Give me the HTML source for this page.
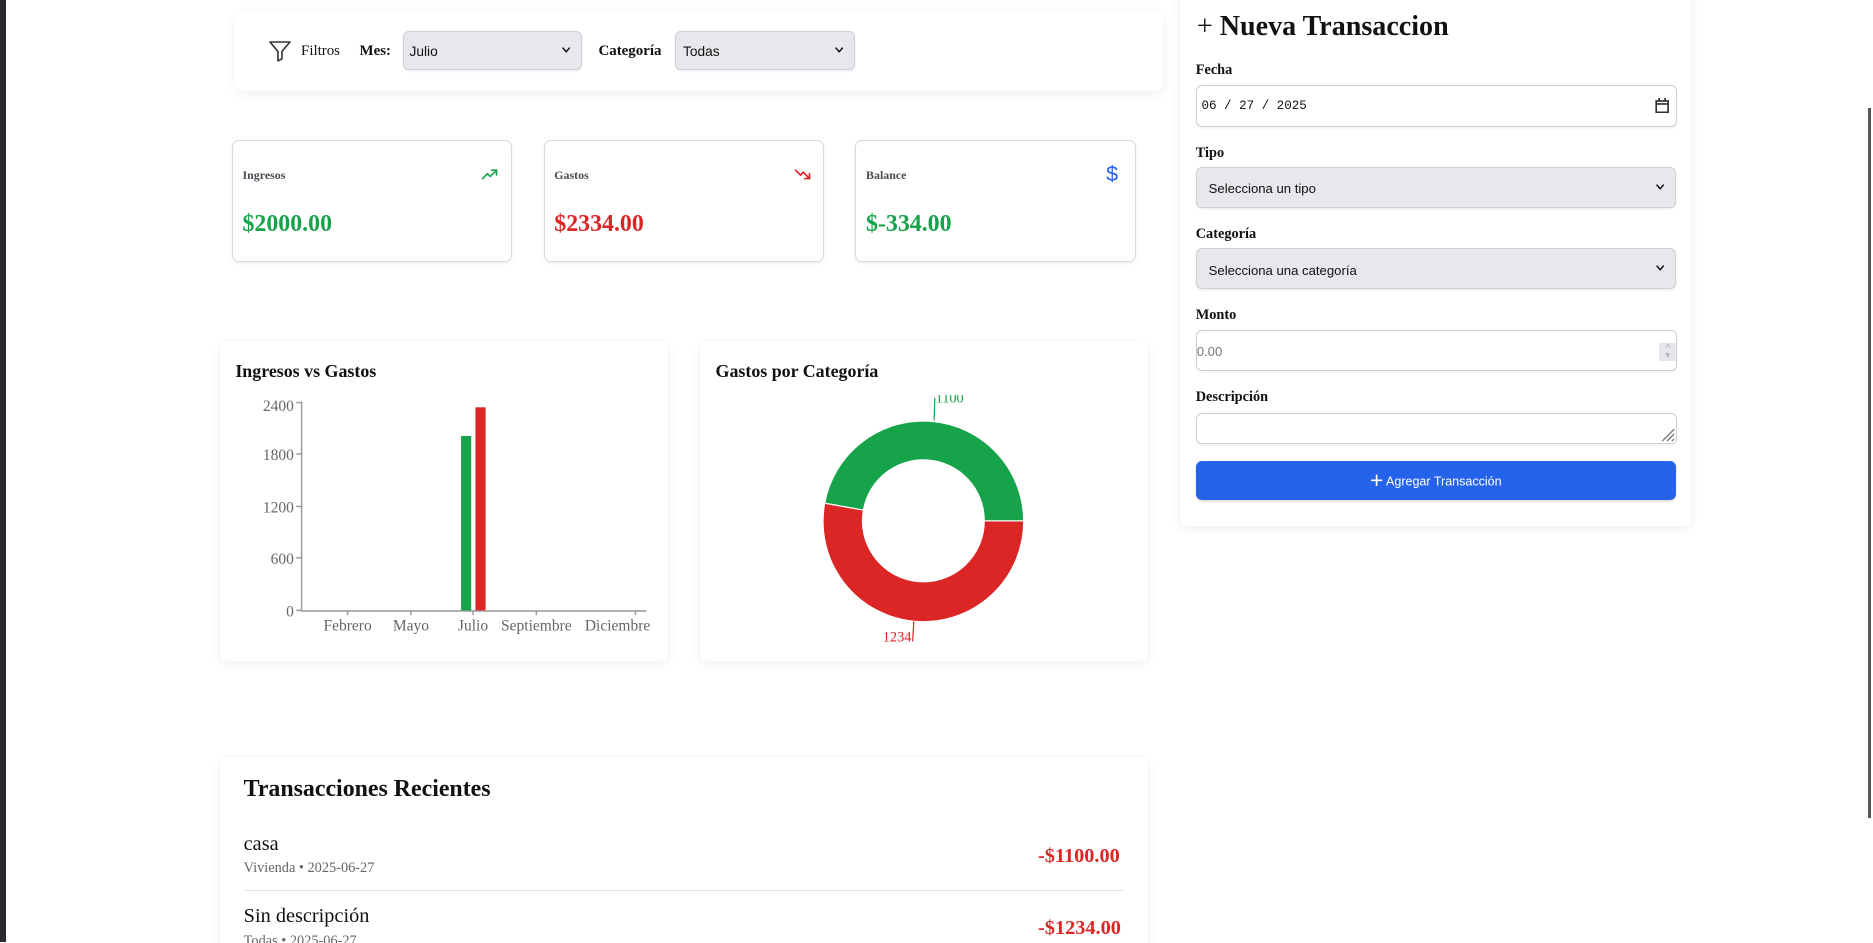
<!DOCTYPE html>
<html><head><meta charset="utf-8"><style>
html,body{margin:0;padding:0;background:#fff;overflow:hidden;width:1873px;height:943px}
#w{zoom:1.19452;position:relative;width:1568px;height:789px;font-family:"Liberation Serif",serif;color:#111}
.a{position:absolute}
.card{position:absolute;background:#fff;border-radius:6px;box-shadow:0 2px 8px rgba(0,0,0,.07)}
.sc{position:absolute;background:#fff;border:1px solid #d6d6dc;border-radius:6px;box-shadow:0 1px 3px rgba(0,0,0,.08)}
.sel{position:absolute;background:#e8e8ec;border:1px solid #cfcfd6;border-radius:5px;font-family:"Liberation Sans",sans-serif;font-size:12px;color:#111;box-sizing:border-box;box-shadow:0 1px 2px rgba(0,0,0,.08)}
.inp{position:absolute;background:#fff;border:1px solid #cfcfd6;border-radius:5px;box-sizing:border-box;box-shadow:0 1px 2px rgba(0,0,0,.06)}
.chev{position:absolute;right:9px;top:50%;margin-top:-3px}
.lbl{position:absolute;font-weight:bold;font-size:12px;left:1001px}
</style></head><body><div id="w">
<div class="a" style="left:0;top:0;width:5px;height:789px;background:#2b2a33"></div>
<div class="a" style="left:1564px;top:90px;width:2px;height:595px;background:#555"></div>

<!-- filters -->
<div class="card" style="left:197px;top:9px;width:777px;height:67px"></div>
<svg class="a" style="left:224px;top:33px" width="20" height="20" viewBox="0 0 24 24" fill="none" stroke="#333" stroke-width="1.6" stroke-linejoin="round"><path d="M2 3h20l-8 9.5V20l-4 2v-9.5z"/></svg>
<div class="a" style="left:252px;top:36px;font-size:12.5px">Filtros</div>
<div class="a" style="left:301px;top:36px;font-size:12.5px;font-weight:bold">Mes:</div>
<div class="sel" style="left:337px;top:26px;width:150px;height:33px;font-size:11.5px"><span class="a" style="left:5px;top:10px">Julio</span><svg class="chev" width="7" height="5" viewBox="0 0 7 5" fill="none" stroke="#111" stroke-width="1.2"><path d="M0.5 0.5l3 3.5 3-3.5"/></svg></div>
<div class="a" style="left:501px;top:36px;font-size:12.5px;font-weight:bold">Categoría</div>
<div class="sel" style="left:565px;top:26px;width:151px;height:33px;font-size:11.5px"><span class="a" style="left:6px;top:10px">Todas</span><svg class="chev" width="7" height="5" viewBox="0 0 7 5" fill="none" stroke="#111" stroke-width="1.2"><path d="M0.5 0.5l3 3.5 3-3.5"/></svg></div>

<!-- stat cards -->
<div class="sc" style="left:194px;top:117px;width:233px;height:101px"></div>
<div class="sc" style="left:455px;top:117px;width:233px;height:101px"></div>
<div class="sc" style="left:716px;top:117px;width:233px;height:101px"></div>
<div class="a" style="left:203px;top:141px;font-size:10px;font-weight:bold;color:#4b4b55">Ingresos</div>
<div class="a" style="left:464px;top:141px;font-size:10px;font-weight:bold;color:#4b4b55">Gastos</div>
<div class="a" style="left:725px;top:141px;font-size:10px;font-weight:bold;color:#4b4b55">Balance</div>
<svg class="a" style="left:402px;top:139px" width="16" height="14" viewBox="0 0 24 24" fill="none" stroke="#16a34a" stroke-width="2.4" stroke-linecap="round" stroke-linejoin="round"><path d="M2 18l7-7 4 4 9-9"/><path d="M15 6h7v7"/></svg>
<svg class="a" style="left:664px;top:139px" width="16" height="14" viewBox="0 0 24 24" fill="none" stroke="#dc2626" stroke-width="2.4" stroke-linecap="round" stroke-linejoin="round"><path d="M2 6l7 7 4-4 9 9"/><path d="M15 18h7v-7"/></svg>
<div class="a" style="left:926px;top:136px;font-size:18px;color:#2563eb;font-family:'Liberation Sans',sans-serif">$</div>
<div class="a" style="left:203px;top:177px;font-size:20px;font-weight:bold;color:#16a34a">$2000.00</div>
<div class="a" style="left:464px;top:177px;font-size:20px;font-weight:bold;color:#dc2626">$2334.00</div>
<div class="a" style="left:725px;top:177px;font-size:20px;font-weight:bold;color:#16a34a">$-334.00</div>

<!-- charts -->
<div class="card" style="left:184px;top:286px;width:375px;height:267px"></div>
<div class="card" style="left:586px;top:286px;width:375px;height:267px"></div>
<div class="a" style="left:197px;top:302px;font-size:15px;font-weight:bold">Ingresos vs Gastos</div>
<div class="a" style="left:599px;top:302px;font-size:15px;font-weight:bold">Gastos por Categoría</div>
<svg class="a" style="left:0;top:0" width="1568" height="789" font-family="Liberation Serif, serif" font-size="13" fill="#666">
<g stroke="#999" stroke-width="1.2">
<line x1="252.5" y1="336" x2="252.5" y2="511"/><line x1="252" y1="511.5" x2="541" y2="511.5"/>
<line x1="248" y1="337" x2="252" y2="337"/><line x1="248" y1="380" x2="252" y2="380"/><line x1="248" y1="424" x2="252" y2="424"/><line x1="248" y1="467" x2="252" y2="467"/><line x1="248" y1="511" x2="252" y2="511"/>
<line x1="291" y1="511" x2="291" y2="515"/><line x1="344" y1="511" x2="344" y2="515"/><line x1="396" y1="511" x2="396" y2="515"/><line x1="449" y1="511" x2="449" y2="515"/><line x1="532" y1="511" x2="532" y2="515"/>
</g>
<g text-anchor="end"><text x="246" y="344">2400</text><text x="246" y="385">1800</text><text x="246" y="429">1200</text><text x="246" y="472">600</text><text x="246" y="516">0</text></g>
<g text-anchor="middle"><text x="291" y="528">Febrero</text><text x="344" y="528">Mayo</text><text x="396" y="528">Julio</text><text x="449" y="528">Septiembre</text><text x="517" y="528">Diciembre</text></g>
<rect x="386" y="365" width="8.5" height="146" fill="#16a34a"/>
<rect x="398" y="341" width="8.5" height="170" fill="#dc2626"/>
<path d="M857 436 A84 84 0 1 1 690.4 421.2 L722.8 427 A51 51 0 1 0 824 436 Z" fill="#dc2626" stroke="#fff" stroke-width="1"/>
<path d="M690.4 421.2 A84 84 0 0 1 857 436 L824 436 A51 51 0 0 0 722.8 427 Z" fill="#16a34a" stroke="#fff" stroke-width="1"/>
<line x1="765" y1="520" x2="764" y2="537" stroke="#dc2626"/>
<text x="751" y="537" fill="#dc2626" text-anchor="middle" font-size="12">1234</text>
</svg>
<div class="a" style="left:760px;top:318px;width:60px;height:13px;background:#fff"></div>
<svg class="a" style="left:0;top:0" width="1568" height="789"><line x1="782" y1="352" x2="782.6" y2="333" stroke="#16a34a"/><text x="795" y="337" fill="#16a34a" text-anchor="middle" font-size="12" font-family="Liberation Serif, serif">1100</text></svg>
<div class="a" style="left:760px;top:318px;width:60px;height:13px;background:#fff"></div>

<!-- transactions -->
<div class="card" style="left:184px;top:634px;width:777px;height:170px"></div>
<div class="a" style="left:204px;top:650px;font-size:20px;font-weight:bold">Transacciones Recientes</div>
<div class="a" style="left:204px;top:697px;font-size:17px">casa</div>
<div class="a" style="left:204px;top:720px;font-size:12px;color:#666">Vivienda • 2025-06-27</div>
<div class="a" style="left:869px;top:707px;font-size:17px;font-weight:bold;color:#dc2626">-$1100.00</div>
<div class="a" style="left:204px;top:745px;width:737px;height:1px;background:#e3e3e6"></div>
<div class="a" style="left:204px;top:758px;font-size:17px">Sin descripción</div>
<div class="a" style="left:204px;top:781px;font-size:12px;color:#666">Todas • 2025-06-27</div>
<div class="a" style="left:869px;top:768px;font-size:17px;font-weight:bold;color:#dc2626">-$1234.00</div>

<!-- right form -->
<div class="card" style="left:988px;top:-8px;width:428px;height:448px"></div>
<div class="a" style="left:1002px;top:9px;font-size:23.5px;font-weight:bold"><span style="font-weight:normal">+</span> Nueva Transaccion</div>
<div class="lbl" style="top:52px">Fecha</div>
<div class="inp" style="left:1001px;top:71px;width:403px;height:35px"><span class="a" style="left:4px;top:11px;font-family:'Liberation Mono',monospace;font-size:10.5px">06 / 27 / 2025</span>
<svg class="a" style="right:6px;top:10px" width="12" height="13" viewBox="0 0 12 13" fill="none" stroke="#333" stroke-width="1.4"><rect x="1" y="2.5" width="10" height="9.5"/><line x1="1" y1="5" x2="11" y2="5"/><line x1="3.5" y1="0" x2="3.5" y2="3"/><line x1="8.5" y1="0" x2="8.5" y2="3"/></svg></div>
<div class="lbl" style="top:121px">Tipo</div>
<div class="sel" style="left:1001px;top:140px;width:402px;height:34px;font-size:11px"><span class="a" style="left:10px;top:11px">Selecciona un tipo</span><svg class="chev" width="7" height="5" viewBox="0 0 7 5" fill="none" stroke="#111" stroke-width="1.2"><path d="M0.5 0.5l3 3.5 3-3.5"/></svg></div>
<div class="lbl" style="top:189px">Categoría</div>
<div class="sel" style="left:1001px;top:208px;width:402px;height:34px;font-size:11px"><span class="a" style="left:10px;top:11px">Selecciona una categoría</span><svg class="chev" width="7" height="5" viewBox="0 0 7 5" fill="none" stroke="#111" stroke-width="1.2"><path d="M0.5 0.5l3 3.5 3-3.5"/></svg></div>
<div class="lbl" style="top:257px">Monto</div>
<div class="inp" style="left:1001px;top:276px;width:403px;height:35px"><span class="a" style="left:0;top:11px;font-family:'Liberation Sans',sans-serif;font-size:11px;color:#777">0.00</span><div class="a" style="right:0;top:10px;width:14px;height:15px;background:#e6e6ea;font-size:7px;color:#777;text-align:center;line-height:7px">^<br>v</div></div>
<div class="lbl" style="top:326px">Descripción</div>
<div class="inp" style="left:1001px;top:346px;width:403px;height:26px"><svg class="a" style="right:1px;bottom:1px" width="12" height="12" stroke="#666"><line x1="11" y1="1" x2="1" y2="11"/><line x1="11" y1="5" x2="5" y2="11"/><line x1="11" y1="9" x2="9" y2="11"/></svg></div>
<div class="a" style="left:1001px;top:386px;width:402px;height:33px;background:#2563eb;border-radius:5px;box-shadow:0 1px 2px rgba(0,0,0,.15);color:#fff;font-family:'Liberation Sans',sans-serif;font-size:10.5px;text-align:center;line-height:33px"><span style="font-size:19px;vertical-align:-2px;font-weight:300">+</span> Agregar Transacción</div>
</div></body></html>
